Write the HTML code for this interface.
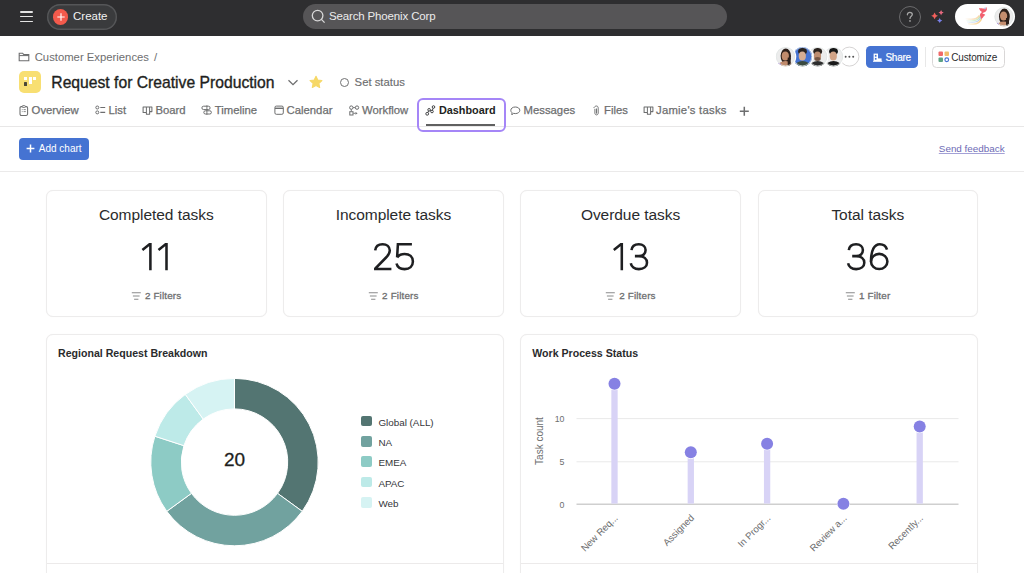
<!DOCTYPE html>
<html><head><meta charset="utf-8">
<style>
*{box-sizing:border-box;margin:0;padding:0}
html,body{width:1024px;height:573px;overflow:hidden;background:#fff;font-family:"Liberation Sans",sans-serif;color:#1e1f21}
.a{position:absolute}
.t{position:absolute;white-space:nowrap;line-height:1}
#top{position:absolute;left:0;top:0;width:1024px;height:36px;background:#2e2e30}
.hl{position:absolute;left:20px;width:13px;height:1.4px;background:#e4e4e4;border-radius:1px}
.tab{position:absolute;top:104.9px;font-size:11.3px;color:#6d6e6f;line-height:1;-webkit-text-stroke:0.25px #6d6e6f}
.card{position:absolute;border:1px solid #edecec;border-radius:7px;background:#fff;box-shadow:0 0 1px #efeeee}
.ct{position:absolute;left:0;right:0;text-align:center;font-size:15.5px;line-height:1;color:#2a2b2d;top:16.6px;letter-spacing:-0.05px}
.cn{position:absolute;left:0;right:0;text-align:center;font-size:38px;line-height:1;color:#1e1f21;top:47.4px}
.cf{position:absolute;left:0;right:0;display:flex;justify-content:center;align-items:center;height:10px;font-size:9.9px;letter-spacing:0.15px;line-height:1;color:#6d6e6f;top:100px;-webkit-text-stroke:0.3px #6d6e6f}
</style></head><body>

<!-- TOP BAR -->
<div id="top">
  <div class="hl" style="top:11.2px"></div>
  <div class="hl" style="top:15.9px"></div>
  <div class="hl" style="top:20.8px"></div>
  <div class="a" style="left:47px;top:4px;width:70px;height:25.5px;border-radius:13px;background:#3a3b3d;box-shadow:inset 0 0 0 1.4px #555658"></div>
  <div class="a" style="left:52.8px;top:9.1px;width:15.6px;height:15.6px;border-radius:50%;background:#f35a4c"></div>
  <svg class="a" style="left:55.6px;top:11.9px" width="10" height="10" viewBox="0 0 10 10"><path d="M5 1.3V8.7M1.3 5H8.7" stroke="#fff" stroke-width="1.15"/></svg>
  <div class="t" style="left:73px;top:11.3px;font-size:11.5px;color:#f2f2f2">Create</div>

  <div class="a" style="left:303px;top:4px;width:424px;height:25px;border-radius:12.5px;background:#565557"></div>
  <svg class="a" style="left:311px;top:9px" width="15" height="15" viewBox="0 0 15 15"><circle cx="6.6" cy="6.6" r="5.3" fill="none" stroke="#d8d8d8" stroke-width="1.3"/><path d="M10.4 10.4L13.6 13.6" stroke="#d8d8d8" stroke-width="1.3"/></svg>
  <div class="t" style="left:329px;top:11.4px;font-size:11.5px;letter-spacing:-0.15px;color:#ececec">Search Phoenix Corp</div>

  <div class="a" style="left:898.7px;top:5.6px;width:22px;height:22px;border-radius:50%;border:1px solid #6a6a6c"></div>
  <svg class="a" style="left:905px;top:11px" width="10" height="12" viewBox="0 0 10 12"><path d="M2.4 3.8C2.4 2.3 3.5 1.4 4.8 1.4C6.2 1.4 7.3 2.3 7.3 3.6C7.3 5.3 5 5.4 5 7.4" fill="none" stroke="#a6a6a6" stroke-width="1.3" stroke-linecap="round"/><circle cx="5" cy="9.9" r="0.85" fill="#a6a6a6"/></svg>
  <svg class="a" style="left:925px;top:5px" width="25" height="23" viewBox="925 5 25 23"><path d="M934.6 12.4Q935.28 15.12 938.0 15.8Q935.28 16.48 934.6 19.2Q933.92 16.48 931.2 15.8Q933.92 15.12 934.6 12.4Z" fill="#f2605c"/><path d="M941.1 10.0Q941.62 12.08 943.7 12.6Q941.62 13.12 941.1 15.2Q940.58 13.12 938.5 12.6Q940.58 12.08 941.1 10.0Z" fill="#e96a80"/><path d="M939.7 17.9Q940.22 19.98 942.3000000000001 20.5Q940.22 21.02 939.7 23.1Q939.18 21.02 937.1 20.5Q939.18 19.98 939.7 17.9Z" fill="#7a80e8"/></svg>
  <div class="a" style="left:955px;top:4px;width:60px;height:25px;border-radius:12.5px;background:#fff"></div>
  <svg class="a" style="left:955px;top:0px" width="40" height="32" viewBox="955 0 40 32">
    <defs><linearGradient id="tr" x1="965" y1="0" x2="981" y2="0" gradientUnits="userSpaceOnUse"><stop offset="0" stop-color="#fff" stop-opacity="0"/><stop offset="1" stop-color="#fff" stop-opacity="1"/></linearGradient>
    <mask id="tm"><rect x="955" y="0" width="40" height="32" fill="url(#tr)"/></mask></defs>
    <g mask="url(#tm)" fill="none">
      <path d="M965 18.6C971 20 977 19.5 979.6 15.5" stroke="#f8cf9a" stroke-width="1.6"/>
      <path d="M966 20.3C972 21.6 977.8 21 980.3 16.5" stroke="#b8e6b4" stroke-width="1.3"/>
      <path d="M967 21.8C973 23 978.6 22.5 980.9 17.5" stroke="#a9c8f0" stroke-width="1.2"/>
      <path d="M968 23.6C974 24.8 979.8 24 981.6 18.5" stroke="#f8cf8a" stroke-width="1.4"/>
    </g>
    <path d="M979 8C980.5 8.5 982.5 8.3 984.3 8.6L986.6 7.3L986.9 9.8C986.3 11.5 984.8 12.3 983.6 12.6L982.3 13.8C983.4 13.6 984.5 13.9 985.3 14.9C984.2 15.5 983.2 16.6 983 17.6L981.4 19C980.6 17.8 980 16 979.9 14.8C980.4 13.2 981.4 12.4 982 12C980.5 11.3 979.4 9.8 979 8Z" fill="#f2606f"/>
    <circle cx="985" cy="8.4" r="0.9" fill="#b9c6f2"/>
  </svg>
  <svg class="a" style="left:994px;top:7px" width="20" height="20" viewBox="0 0 20 20"><defs><clipPath id="pa"><circle cx="10" cy="9.7" r="9.5"/></clipPath></defs><g clip-path="url(#pa)"><rect width="20" height="20" fill="#ececec"/><ellipse cx="10.4" cy="9.6" rx="5.4" ry="8" fill="#2b1f1a"/><ellipse cx="9.6" cy="9" rx="3.6" ry="4.6" fill="#c48d6e"/><ellipse cx="9.6" cy="19.5" rx="7" ry="5" fill="#c48d6e"/><rect x="12" y="11" width="3" height="8" fill="#2b1f1a"/><ellipse cx="3" cy="17.5" rx="2" ry="1.8" fill="#8e62e0"/></g><circle cx="10" cy="9.7" r="9.1" fill="none" stroke="#dfe6e4" stroke-width="0.8"/></svg>
</div>

<!-- HEADER -->
<svg class="a" style="left:18px;top:52px" width="12" height="10" viewBox="0 0 12 10"><path d="M1.2 1.2H4.6L5.8 2.6H10.8V8.8H1.2Z" fill="none" stroke="#6d6e6f" stroke-width="1.1"/><path d="M1.2 3.6H10.8" stroke="#6d6e6f" stroke-width="1"/></svg>
<div class="t" style="left:34.7px;top:51.9px;font-size:11.3px;color:#6d6e6f">Customer Experiences</div>
<div class="t" style="left:154px;top:51.9px;font-size:11.3px;color:#6d6e6f">/</div>

<div class="a" style="left:19px;top:71px;width:22px;height:22px;border-radius:5px;background:#f8df72"></div>
<div class="a" style="left:23.6px;top:76.9px;width:3px;height:2.9px;background:#fff"></div>
<div class="a" style="left:23.6px;top:81.9px;width:3.2px;height:4.6px;border-radius:0.6px;background:#4a4838"></div>
<div class="a" style="left:28.7px;top:76.9px;width:2.9px;height:7.5px;background:#fff"></div>
<div class="a" style="left:33.3px;top:76.9px;width:2.9px;height:2.9px;background:#fff"></div>

<div class="t" style="left:51.3px;top:74.6px;font-size:15.7px;color:#1e1f21;-webkit-text-stroke:0.35px #1e1f21">Request for Creative Production</div>
<svg class="a" style="left:287px;top:78px" width="12" height="9" viewBox="0 0 12 9"><path d="M1.5 2.2L6 6.6L10.5 2.2" fill="none" stroke="#6d6e6f" stroke-width="1.3"/></svg>
<svg class="a" style="left:308.8px;top:74.6px" width="14" height="14" viewBox="0 0 14 14"><path d="M7 1.2L8.8 5L12.9 5.5L9.9 8.4L10.7 12.5L7 10.5L3.3 12.5L4.1 8.4L1.1 5.5L5.2 5Z" fill="#f6d867" stroke="#f6d867" stroke-width="1.1" stroke-linejoin="round"/></svg>
<div class="a" style="left:339.7px;top:77.5px;width:9.6px;height:9.6px;border-radius:50%;border:1.2px solid #707172"></div>
<div class="t" style="left:354.6px;top:77.3px;font-size:11.3px;color:#6d6e6f;-webkit-text-stroke:0.15px #6d6e6f">Set status</div>

<!-- avatars -->
<svg class="a" style="left:0;top:0" width="1024" height="80" viewBox="0 0 1024 80"><circle cx="849.4" cy="56.6" r="10.8" fill="#fff"/><circle cx="849.4" cy="56.6" r="9.5" fill="#fff" stroke="#d6d4d4" stroke-width="1"/><circle cx="845.6" cy="56.8" r="1" fill="#555"/><circle cx="849.4" cy="56.8" r="1" fill="#555"/><circle cx="853.2" cy="56.8" r="1" fill="#555"/><clipPath id="c4"><circle cx="833.5" cy="56.6" r="9.7"/></clipPath><circle cx="833.5" cy="56.6" r="10.799999999999999" fill="#fff"/><g clip-path="url(#c4)"><rect x="823.8" y="46.900000000000006" width="19.4" height="19.4" fill="#eeeeee"/><ellipse cx="833.5" cy="51.4" rx="4.4" ry="3.4" fill="#161616"/><ellipse cx="833.3" cy="56.0" rx="3.6" ry="4.5" fill="#d2a386"/><ellipse cx="833.5" cy="66.6" rx="8" ry="5.6" fill="#1a1a1a"/><circle cx="833.5" cy="56.6" r="9.299999999999999" fill="none" stroke="#dfe6e4" stroke-width="0.8"/></g><clipPath id="c3"><circle cx="817.7" cy="56.6" r="9.7"/></clipPath><circle cx="817.7" cy="56.6" r="10.799999999999999" fill="#fff"/><g clip-path="url(#c3)"><rect x="808.0" y="46.900000000000006" width="19.4" height="19.4" fill="#ececec"/><ellipse cx="817.7" cy="51.4" rx="4.4" ry="3.4" fill="#2a221e"/><ellipse cx="817.5" cy="56.0" rx="3.6" ry="4.5" fill="#bd8d70"/><ellipse cx="817.5" cy="58.9" rx="3.2" ry="2" fill="#5a3e30" opacity="0.7"/><ellipse cx="817.7" cy="66.6" rx="8" ry="5.6" fill="#2e2e2e"/><circle cx="817.7" cy="56.6" r="9.299999999999999" fill="none" stroke="#dfe6e4" stroke-width="0.8"/></g><clipPath id="c2"><circle cx="802.5" cy="56.6" r="9.7"/></clipPath><circle cx="802.5" cy="56.6" r="10.799999999999999" fill="#fff"/><g clip-path="url(#c2)"><rect x="792.8" y="46.900000000000006" width="19.4" height="19.4" fill="#4573d2"/><ellipse cx="802.5" cy="51.4" rx="4.4" ry="3.4" fill="#2b2420"/><ellipse cx="802.3" cy="56.0" rx="3.6" ry="4.5" fill="#d6ad92"/><ellipse cx="802.5" cy="66.6" rx="8" ry="5.6" fill="#3a4a40"/><circle cx="802.5" cy="56.6" r="9.299999999999999" fill="none" stroke="#dfe6e4" stroke-width="0.8"/></g><clipPath id="c1"><circle cx="785.5" cy="56.6" r="9.7"/></clipPath><circle cx="785.5" cy="56.6" r="10.799999999999999" fill="#fff"/><g clip-path="url(#c1)"><rect x="775.8" y="46.900000000000006" width="19.4" height="19.4" fill="#ececec"/><ellipse cx="785.8" cy="56.1" rx="5.2" ry="7.6" fill="#2b1f1a"/><ellipse cx="785.3" cy="56.0" rx="3.6" ry="4.5" fill="#c08b6c"/><ellipse cx="785.5" cy="66.6" rx="8" ry="5.6" fill="#c08b6c"/><rect x="787.7" y="57.6" width="3" height="8" fill="#2b1f1a"/><ellipse cx="779.0" cy="64.6" rx="2" ry="1.6" fill="#8e62e0"/><circle cx="785.5" cy="56.6" r="9.299999999999999" fill="none" stroke="#dfe6e4" stroke-width="0.8"/></g></svg>
<div class="a" style="left:865.6px;top:45.9px;width:52.5px;height:21.7px;border-radius:4.5px;background:#4573d2"></div>
<svg class="a" style="left:872.5px;top:52.5px" width="10" height="9" viewBox="0 0 10 9"><path d="M0.6 0.6H5V8.4H0.6Z" fill="#fff"/><rect x="1.9" y="1.9" width="1.6" height="1.8" fill="#4573d2"/><rect x="1.9" y="4.9" width="1.6" height="1.8" fill="#4573d2"/><path d="M5 5.4H8.6V8.4H5Z" fill="#fff"/><path d="M0 8.3H9.2" stroke="#fff" stroke-width="0.9"/></svg>
<div class="t" style="left:885.5px;top:52.8px;font-size:10px;letter-spacing:-0.3px;color:#fff;-webkit-text-stroke:0.2px #fff">Share</div>
<div class="a" style="left:924.5px;top:47px;width:1px;height:20px;background:#e8e8e8"></div>
<div class="a" style="left:931.7px;top:46.1px;width:73.3px;height:21.5px;border-radius:4.5px;border:1px solid #d9d7d7;background:#fff"></div>
<svg class="a" style="left:937.5px;top:51px" width="12" height="12" viewBox="0 0 12 12"><rect x="0.5" y="0.5" width="4.5" height="4.5" rx="1" fill="#f06a6a"/><rect x="6.5" y="0.5" width="4.5" height="4.5" rx="1" fill="#f1bd6c"/><rect x="0.5" y="6.5" width="4.5" height="4.5" rx="1" fill="#5da283"/><rect x="6.9" y="6.9" width="3.7" height="3.7" rx="1.8" fill="none" stroke="#4573d2" stroke-width="1.2"/></svg>
<div class="t" style="left:951.2px;top:52.8px;font-size:10px;letter-spacing:-0.15px;color:#2a2b2d">Customize</div>

<!-- TABS -->

<svg class="a" style="left:19px;top:104.5px" width="10" height="11" viewBox="0 0 10 11"><rect x="1" y="1.6" width="7.6" height="8.8" rx="1.3" fill="none" stroke="#6d6e6f" stroke-width="1.05"/><rect x="3.2" y="0.6" width="3.2" height="1.8" rx="0.8" fill="#fff" stroke="#6d6e6f" stroke-width="0.9"/><path d="M2.8 4.6H3.6M4.6 4.6H6.8M2.8 6.6H3.6M4.6 6.6H6.8" stroke="#6d6e6f" stroke-width="0.8"/></svg>
<div class="tab" style="left:31.6px">Overview</div>
<svg class="a" style="left:94.5px;top:105px" width="11" height="10" viewBox="0 0 11 10"><circle cx="2.3" cy="2.5" r="1.5" fill="none" stroke="#6d6e6f" stroke-width="1"/><circle cx="2.3" cy="7.4" r="1.5" fill="none" stroke="#6d6e6f" stroke-width="1"/><path d="M5.3 2.5H10.2M5.3 7.4H10.2" stroke="#6d6e6f" stroke-width="1.1"/></svg>
<div class="tab" style="left:108.5px">List</div>
<svg class="a" style="left:141.5px;top:105.5px" width="11" height="9" viewBox="0 0 11 9"><path d="M1.1 1H9.9V5.6H7.6V8.2H4.4V6.4H1.1Z" fill="none" stroke="#6d6e6f" stroke-width="1.05" stroke-linejoin="round"/><path d="M4.4 1V6.4M7.6 1V5.6" stroke="#6d6e6f" stroke-width="1"/></svg>
<div class="tab" style="left:155.4px">Board</div>
<svg class="a" style="left:200.5px;top:104.8px" width="11" height="10" viewBox="0 0 11 10"><rect x="0.9" y="1.2" width="8.2" height="3.4" rx="1.7" fill="none" stroke="#6d6e6f" stroke-width="1"/><rect x="2.8" y="5.8" width="7.6" height="3.2" rx="1.6" fill="none" stroke="#6d6e6f" stroke-width="1"/><path d="M5.9 0.3V9.8" stroke="#6d6e6f" stroke-width="0.9"/></svg>
<div class="tab" style="left:214.8px">Timeline</div>
<svg class="a" style="left:273.5px;top:105px" width="10" height="10" viewBox="0 0 10 10"><rect x="0.9" y="1.1" width="8.4" height="8.2" rx="1.4" fill="none" stroke="#6d6e6f" stroke-width="1"/><path d="M1 3.3H9.2" stroke="#6d6e6f" stroke-width="1.4"/></svg>
<div class="tab" style="left:286.6px">Calendar</div>
<svg class="a" style="left:348.5px;top:104.6px" width="11" height="11" viewBox="0 0 11 11"><circle cx="2.3" cy="2.6" r="1.7" fill="none" stroke="#6d6e6f" stroke-width="1"/><circle cx="8" cy="2.6" r="1.7" fill="none" stroke="#6d6e6f" stroke-width="1"/><path d="M4 2.6H6.3M2.3 4.3V6.2" stroke="#6d6e6f" stroke-width="0.9"/><rect x="0.8" y="6.7" width="3.2" height="3.3" fill="none" stroke="#6d6e6f" stroke-width="1"/><path d="M4.3 8.3H6.5" stroke="#6d6e6f" stroke-width="0.9"/><path d="M6.5 6.9L8.6 8.3L6.5 9.8Z" fill="#6d6e6f"/></svg>
<div class="tab" style="left:362px">Workflow</div>
<svg class="a" style="left:425.3px;top:104.6px" width="11" height="11" viewBox="0 0 11 11"><circle cx="2.2" cy="8.8" r="1.4" fill="none" stroke="#3a3b3d" stroke-width="0.95"/><circle cx="4.1" cy="4.8" r="1.3" fill="none" stroke="#3a3b3d" stroke-width="0.95"/><circle cx="7" cy="6.5" r="1.3" fill="none" stroke="#3a3b3d" stroke-width="0.95"/><circle cx="8.5" cy="2" r="1.3" fill="none" stroke="#3a3b3d" stroke-width="0.95"/><path d="M2.8 7.6L3.6 6M5.2 5.4L6 6M7.4 5.3L8.1 3.2" stroke="#3a3b3d" stroke-width="0.95"/></svg>
<div class="tab" style="left:438.9px;font-weight:bold;font-size:10.85px;top:105.3px;color:#1e1f21;-webkit-text-stroke:0">Dashboard</div>
<svg class="a" style="left:510.3px;top:105.5px" width="11" height="10" viewBox="0 0 11 10"><path d="M5.3 1C7.9 1 9.8 2.4 9.8 4.3C9.8 6.2 7.9 7.6 5.3 7.6C4.6 7.6 4 7.5 3.4 7.3L1.9 8.9L2 6.7C1.2 6.1 0.8 5.2 0.8 4.3C0.8 2.4 2.7 1 5.3 1Z" fill="none" stroke="#6d6e6f" stroke-width="1" stroke-linejoin="round"/></svg>
<div class="tab" style="left:523.6px">Messages</div>
<svg class="a" style="left:592px;top:104.6px" width="9" height="11" viewBox="0 0 9 11"><path d="M2.9 4.2V8.1C2.9 9.2 3.6 9.9 4.5 9.9C5.4 9.9 6.2 9.2 6.2 8.1V3.2C6.2 1.8 5.5 1 4.5 1C3.3 1 2.4 1.8 1.9 2.7M4.5 3.9V8.2" fill="none" stroke="#6d6e6f" stroke-width="0.95" stroke-linecap="round"/></svg>
<div class="tab" style="left:604px">Files</div>
<svg class="a" style="left:642.5px;top:105.5px" width="11" height="9" viewBox="0 0 11 9"><path d="M1.1 1H9.9V5.6H7.6V8.2H4.4V6.4H1.1Z" fill="none" stroke="#6d6e6f" stroke-width="1.05" stroke-linejoin="round"/><path d="M4.4 1V6.4M7.6 1V5.6" stroke="#6d6e6f" stroke-width="1"/></svg>
<div class="tab" style="left:656px;letter-spacing:0.25px">Jamie's tasks</div>
<svg class="a" style="left:738.5px;top:105.5px" width="11" height="11" viewBox="0 0 11 11"><path d="M5.3 0.8V9.8M0.8 5.3H9.8" stroke="#6d6e6f" stroke-width="1.5"/></svg>

<div class="a" style="left:0;top:126px;width:1024px;height:1px;background:#e8e7e7"></div>
<div class="a" style="left:417px;top:97.8px;width:89.2px;height:34.3px;border:2px solid #a586f7;border-radius:6px"></div>
<div class="a" style="left:425.7px;top:124px;width:69px;height:2px;background:#606060"></div>

<!-- TOOLBAR -->
<div class="a" style="left:19px;top:137.5px;width:70px;height:22.2px;border-radius:4px;background:#4573d2"></div>
<svg class="a" style="left:26px;top:144px" width="9" height="9" viewBox="0 0 9 9"><path d="M4.5 0.6V8.4M0.6 4.5H8.4" stroke="#fff" stroke-width="1.5"/></svg>
<div class="t" style="left:38.8px;top:143.7px;font-size:10px;color:#fff">Add chart</div>
<div class="t" style="left:938.8px;top:143.6px;font-size:9.9px;color:#6d6ab5;text-decoration:underline;text-decoration-color:#a3a1d6">Send feedback</div>
<div class="a" style="left:0;top:171px;width:1024px;height:1px;background:#ebeaea"></div>

<!-- CARDS -->
<div class="card" style="left:46px;top:189.5px;width:220.5px;height:127px">
  <div class="ct">Completed tasks</div><div class="cf"><svg width="10" height="9" viewBox="0 0 10 9" style="margin-right:3.8px;flex:none"><path d="M0.8 1.7H9.8M1.9 5H8.6M3.1 8.3H7.4" stroke="#8a8b8c" stroke-width="1.1"/></svg><span>2 Filters</span></div>
</div>
<div class="card" style="left:283.2px;top:189.5px;width:220.5px;height:127px">
  <div class="ct">Incomplete tasks</div><div class="cf"><svg width="10" height="9" viewBox="0 0 10 9" style="margin-right:3.8px;flex:none"><path d="M0.8 1.7H9.8M1.9 5H8.6M3.1 8.3H7.4" stroke="#8a8b8c" stroke-width="1.1"/></svg><span>2 Filters</span></div>
</div>
<div class="card" style="left:520.3px;top:189.5px;width:220.5px;height:127px">
  <div class="ct">Overdue tasks</div><div class="cf"><svg width="10" height="9" viewBox="0 0 10 9" style="margin-right:3.8px;flex:none"><path d="M0.8 1.7H9.8M1.9 5H8.6M3.1 8.3H7.4" stroke="#8a8b8c" stroke-width="1.1"/></svg><span>2 Filters</span></div>
</div>
<div class="card" style="left:757.5px;top:189.5px;width:220.5px;height:127px">
  <div class="ct">Total tasks</div><div class="cf"><svg width="10" height="9" viewBox="0 0 10 9" style="margin-right:3.8px;flex:none"><path d="M0.8 1.7H9.8M1.9 5H8.6M3.1 8.3H7.4" stroke="#8a8b8c" stroke-width="1.1"/></svg><span>1 Filter</span></div>
</div>

<div class="card" style="left:46px;top:334px;width:457.5px;height:260px"><div class="a" style="left:0.5px;top:0.5px;width:455px;height:240px">
  <div class="t" style="left:10.5px;top:12.2px;font-size:10.6px;font-weight:bold;color:#2a2b2d">Regional Request Breakdown</div><svg class="a" style="left:0;top:0" width="455" height="228" viewBox="0 0 455 228"><path d="M186.50 42.40A83.7 83.7 0 0 1 254.21 175.30L229.54 157.37A53.2 53.2 0 0 0 186.50 72.90Z" fill="#537572" stroke="#fff" stroke-width="1"/><path d="M254.21 175.30A83.7 83.7 0 0 1 118.79 175.30L143.46 157.37A53.2 53.2 0 0 0 229.54 157.37Z" fill="#71a29f" stroke="#fff" stroke-width="1"/><path d="M118.79 175.30A83.7 83.7 0 0 1 106.90 100.24L135.90 109.66A53.2 53.2 0 0 0 143.46 157.37Z" fill="#8dcbc5" stroke="#fff" stroke-width="1"/><path d="M106.90 100.24A83.7 83.7 0 0 1 137.30 58.39L155.23 83.06A53.2 53.2 0 0 0 135.90 109.66Z" fill="#bdeae8" stroke="#fff" stroke-width="1"/><path d="M137.30 58.39A83.7 83.7 0 0 1 186.50 42.40L186.50 72.90A53.2 53.2 0 0 0 155.23 83.06Z" fill="#d6f3f3" stroke="#fff" stroke-width="1"/>
<text x="186.5" y="129.8" text-anchor="middle" font-family="Liberation Sans" font-size="19" fill="#1e1f21" stroke="#1e1f21" stroke-width="0.3">20</text>
</svg><div class="a" style="left:313.1px;top:80.1px;width:11px;height:10.6px;border-radius:2px;background:#537572"></div><div class="t" style="left:330.9px;top:82.0px;font-size:9.85px;color:#35363a">Global (ALL)</div><div class="a" style="left:313.1px;top:100.5px;width:11px;height:10.6px;border-radius:2px;background:#71a29f"></div><div class="t" style="left:330.9px;top:102.4px;font-size:9.85px;color:#35363a">NA</div><div class="a" style="left:313.1px;top:120.9px;width:11px;height:10.6px;border-radius:2px;background:#8dcbc5"></div><div class="t" style="left:330.9px;top:122.8px;font-size:9.85px;color:#35363a">EMEA</div><div class="a" style="left:313.1px;top:141.3px;width:11px;height:10.6px;border-radius:2px;background:#bdeae8"></div><div class="t" style="left:330.9px;top:143.2px;font-size:9.85px;color:#35363a">APAC</div><div class="a" style="left:313.1px;top:161.7px;width:11px;height:10.6px;border-radius:2px;background:#d6f3f3"></div><div class="t" style="left:330.9px;top:163.6px;font-size:9.85px;color:#35363a">Web</div>
  <div class="a" style="left:-0.5px;top:227.5px;width:456px;height:1px;background:#eceaea"></div>
</div></div>
<div class="card" style="left:520.3px;top:334px;width:457.7px;height:260px"><div class="a" style="left:0.5px;top:0.5px;width:455px;height:240px">
  <div class="t" style="left:10.5px;top:12.2px;font-size:10.6px;font-weight:bold;color:#2a2b2d">Work Process Status</div><svg class="a" style="left:0;top:0" width="455" height="228" viewBox="0 0 455 228"><path d="M54.5 82.6H436.5M54.5 125.8H436.5" stroke="#e9e9e9" stroke-width="1"/><path d="M54.5 168.3H436.5" stroke="#cfcfcf" stroke-width="1.5"/><text x="42.5" y="85.8" text-anchor="end" font-family="Liberation Sans" font-size="8.8" fill="#6d6e6f">10</text><text x="42.5" y="129.0" text-anchor="end" font-family="Liberation Sans" font-size="8.8" fill="#6d6e6f">5</text><text x="42.5" y="171.5" text-anchor="end" font-family="Liberation Sans" font-size="8.8" fill="#6d6e6f">0</text><text transform="translate(20.6,105.0) rotate(-90)" text-anchor="middle" font-family="Liberation Sans" font-size="10" fill="#6d6e6f">Task count</text><rect x="89.35" y="48.32" width="6.3" height="119.28" fill="#d8d3f6"/><circle cx="92.50" cy="47.72" r="6.6" fill="#fff"/><circle cx="92.50" cy="47.72" r="6" fill="#8681e3"/><text transform="translate(96.5,182.5) rotate(-45)" text-anchor="end" font-family="Liberation Sans" font-size="9.6" fill="#6d6e6f">New Req...</text><rect x="165.65" y="116.88" width="6.3" height="50.72" fill="#d8d3f6"/><circle cx="168.80" cy="116.28" r="6.6" fill="#fff"/><circle cx="168.80" cy="116.28" r="6" fill="#8681e3"/><text transform="translate(172.8,182.5) rotate(-45)" text-anchor="end" font-family="Liberation Sans" font-size="9.6" fill="#6d6e6f">Assigned</text><rect x="241.95" y="108.31" width="6.3" height="59.29" fill="#d8d3f6"/><circle cx="245.10" cy="107.71" r="6.6" fill="#fff"/><circle cx="245.10" cy="107.71" r="6" fill="#8681e3"/><text transform="translate(249.1,182.5) rotate(-45)" text-anchor="end" font-family="Liberation Sans" font-size="9.6" fill="#6d6e6f">In Progr...</text><circle cx="321.40" cy="167.70" r="6.6" fill="#fff"/><circle cx="321.40" cy="167.70" r="6" fill="#8681e3"/><text transform="translate(325.4,182.5) rotate(-45)" text-anchor="end" font-family="Liberation Sans" font-size="9.6" fill="#6d6e6f">Review a...</text><rect x="394.55" y="91.17" width="6.3" height="76.43" fill="#d8d3f6"/><circle cx="397.70" cy="90.57" r="6.6" fill="#fff"/><circle cx="397.70" cy="90.57" r="6" fill="#8681e3"/><text transform="translate(401.7,182.5) rotate(-45)" text-anchor="end" font-family="Liberation Sans" font-size="9.6" fill="#6d6e6f">Recently...</text></svg>
  <div class="a" style="left:-0.5px;top:227.5px;width:456px;height:1px;background:#eceaea"></div>
</div></div>

<svg class="a" style="left:0;top:0" width="1024" height="573" viewBox="0 0 1024 573" fill="none" stroke="#1e1f21" stroke-width="2.55"><g transform="translate(141.5,243)"><path d="M0.9 6.9L8.0 1.25H8.9V27.3"/></g><g transform="translate(157.6,243)"><path d="M0.9 6.9L8.0 1.25H8.9V27.3"/></g><g transform="translate(373.7,243)"><path d="M1.5 7.4C1.9 3.6 4.8 1.2 8.9 1.2C13.1 1.2 16.1 3.8 16.1 7.6C16.1 10.4 14.6 12.3 12.4 14.5L1.6 25.6V26.05H17.7"/></g><g transform="translate(395.3,243)"><path d="M16.6 1.2H2.6L1.8 14.4M1.8 14.4C3.4 12.1 6.0 10.9 9.3 10.9C14.3 10.9 17.6 14.1 17.6 18.5C17.6 23.0 14.3 26.1 9.4 26.1C5.1 26.1 2.0 23.9 1.2 20.5"/></g><g transform="translate(612.9,243)"><path d="M0.9 6.9L8.0 1.25H8.9V27.3"/></g><g transform="translate(629.6,243)"><path d="M1.9 7.2C2.3 3.5 5.0 1.2 9.2 1.2C13.3 1.2 16.0 3.6 16.0 7.1C16.0 10.7 13.4 13.1 9.2 13.1H5.3M9.2 13.1C14.2 13.1 17.4 15.8 17.4 19.7C17.4 23.6 14.1 26.1 9.3 26.1C4.8 26.1 1.7 23.6 1.2 20.3"/></g><g transform="translate(846.9,243)"><path d="M1.9 7.2C2.3 3.5 5.0 1.2 9.2 1.2C13.3 1.2 16.0 3.6 16.0 7.1C16.0 10.7 13.4 13.1 9.2 13.1H5.3M9.2 13.1C14.2 13.1 17.4 15.8 17.4 19.7C17.4 23.6 14.1 26.1 9.3 26.1C4.8 26.1 1.7 23.6 1.2 20.3"/></g><g transform="translate(869.7,243)"><ellipse cx="9.5" cy="18.45" rx="8.2" ry="7.6"/><path d="M1.3 18.6C1.2 6.6 5.0 1.2 10.0 1.2C13.5 1.2 16.3 3.1 17.3 6.6"/></g></svg>
</body></html>
